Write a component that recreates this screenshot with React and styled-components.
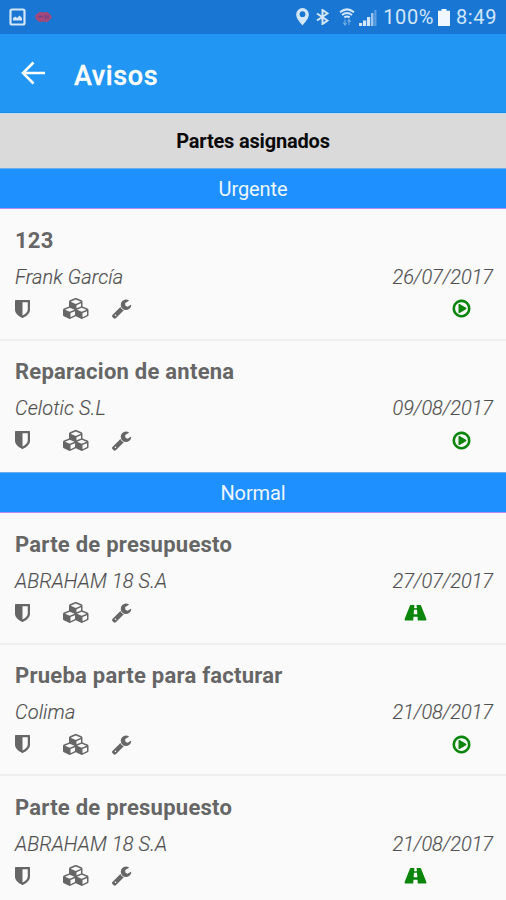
import React from 'react';
import styled, { createGlobalStyle } from 'styled-components';

const GlobalStyle = createGlobalStyle`
    * {
        box-sizing: border-box;
    }

    body {
        margin: 0;
        background: #fafafa;
        font-family: Roboto, 'Liberation Sans', sans-serif;
        overflow: hidden;
    }
`;

const Screen = styled.div`
    width: 506px;
    height: 900px;
    overflow: hidden;
    background: #fafafa;
`;

const StatusBar = styled.div`
    height: 34px;
    display: flex;
    align-items: center;
    justify-content: space-between;
    padding: 0 9px 0 9px;
    background: #1976d2;
    color: #d3e6fa;
`;

const StatusGroup = styled.div`
    display: flex;
    align-items: center;
`;

const StatusIcon = styled.svg`
    display: block;
    flex: none;
    margin-right: ${({ $gap }) => $gap || 0}px;
`;

const StatusText = styled.span`
    font-size: 20px;
    line-height: 34px;
    letter-spacing: ${({ $spacing }) => $spacing || 0}px;
    margin-right: ${({ $gap }) => $gap || 0}px;
`;

const AppBar = styled.header`
    height: 79px;
    display: flex;
    align-items: center;
    padding: 5px 0 0 21px;
    background: #2196f3;
    border-bottom: 1px solid #1590ea;
    color: #ffffff;
`;

const BackIcon = styled.svg`
    display: block;
    margin: -5px 28px 0 0;
`;

const AppTitle = styled.h1`
    margin: 0;
    font-size: 27px;
    font-weight: 500;
    line-height: 32px;
    letter-spacing: 0.6px;
    -webkit-text-stroke: 0.3px currentColor;
`;

const ListTitle = styled.div`
    height: 55px;
    display: flex;
    align-items: center;
    justify-content: center;
    background: #dadada;
    border-top: 1px solid #bfdcef;
    color: #0a0a0a;
    font-size: 20px;
    font-weight: 700;
    letter-spacing: -0.18px;
`;

const SectionTitle = styled.div`
    height: 41px;
    display: flex;
    align-items: center;
    justify-content: center;
    padding-top: 1px;
    background: #1e90ff;
    border-top: 1px solid #6aaeea;
    border-bottom: 1px solid #b78bea;
    color: #eef6ff;
    font-size: 20px;
    letter-spacing: -0.1px;
`;

const Row = styled.article`
    height: 131.5px;
    padding: 17.5px 13px 0 15px;
    border-bottom: ${({ $last }) => ($last ? 'none' : '2px solid #eeeeee')};
    color: #666666;
`;

const RowTitle = styled.h2`
    margin: 0;
    font-size: 22px;
    font-weight: 700;
    line-height: 28px;
    letter-spacing: 0.25px;
`;

const RowInfo = styled.div`
    display: flex;
    justify-content: space-between;
    margin-top: 9px;
    font-size: 20px;
    font-style: italic;
    font-weight: 300;
    line-height: 26px;
    color: #505050;
    -webkit-text-stroke: 0.15px currentColor;
`;

const Client = styled.span`
    letter-spacing: 0.1px;
`;

const DateText = styled.span`
    letter-spacing: -0.1px;
`;

const RowIcons = styled.div`
    height: 24px;
    display: flex;
    align-items: center;
    margin-top: 7px;
`;

const IconSlot = styled.span`
    display: flex;
    width: ${({ $width }) => $width}px;
`;

const StateSlot = styled.span`
    display: flex;
    margin-left: auto;
    margin-right: ${({ $road }) => ($road ? 66 : 21)}px;
    color: #0b850b;
`;

const Glyph = styled.svg`
    display: block;
    fill: currentColor;
`;

const ShieldIcon = () => (
    <Glyph width="15" height="18" viewBox="256 128 1280 1536" preserveAspectRatio="none">
        <path d="M1344 960v-640h-448v1137q119-63 213-137 235-184 235-360zm192-768v768q0 86-33.5 170.5t-83 150-118 127.5-126.500 103-121 77.5-89.5 49.5-42.5 20q-12 6-26 6t-26-6q-16-7-42.5-20t-89.5-49.5-121-77.5-126.500-103-118-127.500-83-150-33.500-170.500v-768q0-26 19-45t45-19h1152q26 0 45 19t19 45z" />
    </Glyph>
);

const CubesIcon = () => (
    <Glyph width="27" height="21" viewBox="0 0 2304 1792">
        <path d="M640 1632l384-192v-314l-384 164v342zm-64-454l404-173-404-173-404 173zm1088 454l384-192v-314l-384 164v342zm-64-454l404-173-404-173-404 173zm-448-293l384-165v-266l-384 164v267zm-64-379l441-189-441-189-441 189zm1088 518v416q0 36-19 67t-52 47l-448 224q-25 14-57 14t-57-14l-448-224q-4-2-7-4-2 2-7 4l-448 224q-25 14-57 14t-57-14l-448-224q-33-16-52-47t-19-67v-416q0-38 21.5-70t56.5-48l434-186v-400q0-38 21.5-70t56.5-48l448-192q23-10 50-10t50 10l448 192q35 16 56.5 48t21.5 70v400l434 186q36 16 57 48t21 70z" />
    </Glyph>
);

const WrenchIcon = () => (
    <Glyph width="21" height="21" viewBox="0 0 1792 1792">
        <path d="M448 1472q0-26-19-45t-45-19-45 19-19 45 19 45 45 19 45-19 19-45zm644-420l-682 682q-37 37-90 37-52 0-91-37l-106-108q-38-36-38-90 0-53 38-91l681-681q39 98 114.5 173.5t173.5 114.5zm634-435q0 39-23 106-47 134-164.5 217.5t-258.5 83.5q-185 0-316.5-131.5t-131.5-316.5 131.5-316.5 316.5-131.5q58 0 121.5 16.5t107.5 46.5q16 11 16 28t-16 28l-293 169v224l193 107q5-3 79-48.5t135.5-81 70.5-35.5q15 0 23.5 10t8.5 25z" />
    </Glyph>
);

const PlayIcon = () => (
    <Glyph width="21" height="21" viewBox="0 0 1792 1792">
        <path d="M1312 896q0 37-32 55l-544 320q-15 9-32 9-16 0-32-8-32-19-32-56v-640q0-37 32-56 33-18 64 1l544 320q32 18 32 55zm128 0q0-148-73-273t-198-198-273-73-273 73-198 198-73 273 73 273 198 198 273 73 273-73 198-198 73-273zm224 0q0 209-103 385.5t-279.5 279.5-385.5 103-385.5-103-279.5-279.5-103-385.5 103-385.5 279.5-279.5 385.5-103 385.5 103 279.5 279.5 103 385.5z" />
    </Glyph>
);

const RoadIcon = () => (
    <Glyph width="23" height="21.5" viewBox="0 0 1920 1792">
        <path d="M1111 1000v-4l-24-320q-1-13-11-22.5t-23-9.5h-186q-13 0-23 9.5t-11 22.5l-24 320v4q-1 12 8 20t21 8h244q12 0 21-8t8-20zm759 466q0 74-46 74h-704q13 0 22-9.5t8-22.5l-20-256q-1-13-11-22.5t-23-9.5h-272q-13 0-23 9.5t-11 22.5l-20 256q-1 13 8 22.5t22 9.5h-704q-46 0-46-74 0-54 26-116l417-1044q8-19 26-33t38-14h339q-13 0-23 9.5t-11 22.5l-15 192q-1 14 8 23t22 9h166q13 0 22-9t8-23l-15-192q-1-13-11-22.5t-23-9.5h339q20 0 38 14t26 33l417 1044q26 62 26 116z" />
    </Glyph>
);

const sections = [
    {
        name: 'Urgente',
        items: [
            { title: '123', client: 'Frank García', date: '26/07/2017', state: 'play' },
            { title: 'Reparacion de antena', client: 'Celotic S.L', date: '09/08/2017', state: 'play' },
        ],
    },
    {
        name: 'Normal',
        items: [
            { title: 'Parte de presupuesto', client: 'ABRAHAM 18 S.A', date: '27/07/2017', state: 'road' },
            { title: 'Prueba parte para facturar', client: 'Colima', date: '21/08/2017', state: 'play' },
            { title: 'Parte de presupuesto', client: 'ABRAHAM 18 S.A', date: '21/08/2017', state: 'road' },
        ],
    },
];

const Status = () => (
    <StatusBar>
        <StatusGroup>
            <StatusIcon $gap={9} width="17" height="18" viewBox="0 0 17 18">
                <rect x="1.5" y="1.5" width="14" height="15" rx="1.5" fill="none" stroke="currentColor" strokeWidth="2.2" />
                <path d="M4 12.5V10l2.5-1.5L8 10l2.5-2.5L13 10v2.5z" fill="currentColor" />
            </StatusIcon>
            <StatusIcon width="17" height="12" viewBox="0 0 17 12">
                <path d="M4.5 1h3l1 1 1-1h3l4 4v2l-4 4h-3l-1-1-1 1h-3L.5 8V4z" fill="#a34878" />
                <path d="M3.5 5.5h4M10.5 4v4M13 4.5v3" stroke="#663f8d" strokeWidth="1.3" />
            </StatusIcon>
        </StatusGroup>
        <StatusGroup>
            <StatusIcon $gap={7} width="13" height="18" viewBox="0 0 13 18">
                <path d="M6.5 0A6.3 6.3 0 0 0 .2 6.4C.2 10.5 4 14 6.5 17.5 9 14 12.8 10.5 12.8 6.4A6.3 6.3 0 0 0 6.5 0zm0 3.3a2.9 2.9 0 1 1 0 5.8 2.9 2.9 0 0 1 0-5.8z" fill="currentColor" fillRule="evenodd" />
            </StatusIcon>
            <StatusIcon $gap={10} width="13" height="16" viewBox="0 0 13 18" preserveAspectRatio="none">
                <path d="M1 5l10.5 8L6.5 17V1l5 4L1 13" fill="none" stroke="currentColor" strokeWidth="2" />
            </StatusIcon>
            <StatusIcon $gap={4} width="16" height="18" viewBox="0 0 16 18">
                <g fill="none" stroke="currentColor" strokeWidth="2">
                    <path d="M1 4.2Q8-1.5 15 4.2" />
                    <path d="M3 7q5-4 10 0" />
                    <path d="M5.3 9.4q2.7-2 5.4 0" />
                </g>
                <path d="M6 11.5v5M4.3 14.5L6 17l1.5-2M10 17v-5M8.5 13.5L10 11.5l1.7 2.5" fill="none" stroke="#75afe8" strokeWidth="1.1" />
            </StatusIcon>
            <StatusIcon $gap={6} width="18" height="17" viewBox="0 0 18 17">
                <path d="M0 14h3.2v3H0zM4 11.5h3.2V17H4zM8 8h3.2v9H8z" fill="currentColor" />
                <path d="M12 4h2.500v13H12z" fill="#9bc5ef" />
                <path d="M15.300 1h2.200v16h-2.200z" fill="#5d9fe0" />
            </StatusIcon>
            <StatusText $gap={4} $spacing={0.6}>100%</StatusText>
            <StatusIcon $gap={6} width="12" height="17" viewBox="0 0 12 17">
                <path d="M3.5 0h5v1.8H12V17H0V1.8h3.5z" fill="#f0f7ff" />
            </StatusIcon>
            <StatusText $spacing={0.6}>8:49</StatusText>
        </StatusGroup>
    </StatusBar>
);

const Aviso = ({ item, last }) => (
    <Row $last={last}>
        <RowTitle>{item.title}</RowTitle>
        <RowInfo>
            <Client>{item.client}</Client>
            <DateText>{item.date}</DateText>
        </RowInfo>
        <RowIcons>
            <IconSlot $width={48}><ShieldIcon /></IconSlot>
            <IconSlot $width={48}><CubesIcon /></IconSlot>
            <IconSlot $width={21}><WrenchIcon /></IconSlot>
            <StateSlot $road={item.state === 'road'}>
                {item.state === 'road' ? <RoadIcon /> : <PlayIcon />}
            </StateSlot>
        </RowIcons>
    </Row>
);

const App = () => {
    return (
        <>
            <GlobalStyle />
            <Screen>
                <Status />
                <AppBar>
                    <BackIcon width="25" height="24" viewBox="0 0 25 24">
                        <path d="M24 12H2.5M12.5 1.5L2 12l10.5 10.5" fill="none" stroke="currentColor" strokeWidth="2.6" />
                    </BackIcon>
                    <AppTitle>Avisos</AppTitle>
                </AppBar>
                <ListTitle>Partes asignados</ListTitle>
                {sections.map((section) => (
                    <section key={section.name}>
                        <SectionTitle>{section.name}</SectionTitle>
                        {section.items.map((item, index) => (
                            <Aviso item={item} key={index} last={index === section.items.length - 1} />
                        ))}
                    </section>
                ))}
            </Screen>
        </>
    );
};

export default App;
